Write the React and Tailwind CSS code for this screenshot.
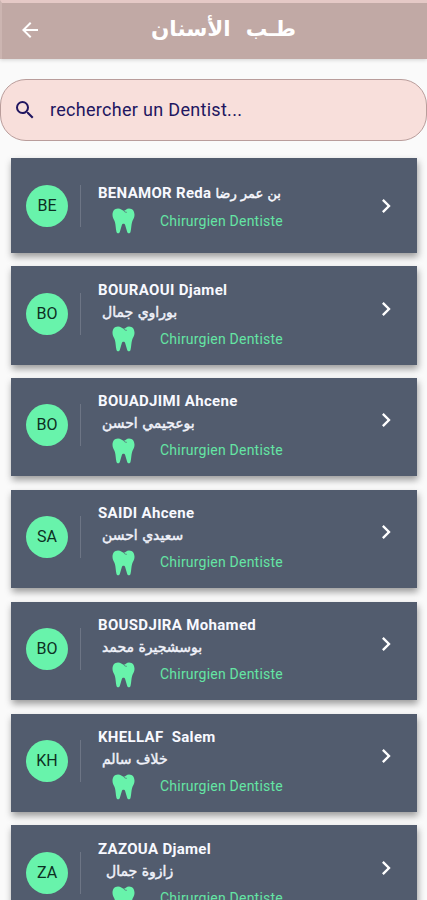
import { MdArrowBack, MdSearch, MdKeyboardArrowRight } from "react-icons/md";

const dentists = [
  { initials: "BO", name: "BOURAOUI Djamel", arabic: "بوراوي جمال", indent: "ml-1" },
  { initials: "BO", name: "BOUADJIMI Ahcene", arabic: "بوعجيمي احسن", indent: "ml-1" },
  { initials: "SA", name: "SAIDI Ahcene", arabic: "سعيدي احسن", indent: "ml-1" },
  { initials: "BO", name: "BOUSDJIRA Mohamed", arabic: "بوسشجيرة محمد", indent: "ml-1" },
  { initials: "KH", name: "KHELLAF  Salem", arabic: "خلاف سالم", indent: "ml-1" },
  { initials: "ZA", name: "ZAZOUA Djamel", arabic: "زازوة جمال", indent: "ml-2" },
];

function Avatar({ initials }) {
  return (
    <div className="ml-[15px] flex h-[42px] w-[55px] shrink-0 border-r border-[#6d7585]">
      <div className="flex size-[42px] items-center justify-center rounded-full bg-[#68f3ab] text-[16px] text-[#0d3023]">
        {initials}
      </div>
    </div>
  );
}

function Tooth() {
  return (
    <svg viewBox="0 0 23 26" className="ml-[14px] h-[26px] w-[23px] shrink-0" fill="#68f3ab">
      <path d="M6 .5C2.300.5.5 3.300.5 7C.5 10 2.200 11.500 2.900 14C3.700 17 3.700 20.500 4.500 24C4.900 25.800 7.300 25.800 7.800 24L9.800 17.200C10.300 15.300 12.700 15.300 13.200 17.200L15.200 24C15.700 25.800 18.100 25.800 18.500 24C19.300 20.500 19.300 17 20.100 14C20.800 11.500 22.500 10 22.500 7C22.500 3.300 20.700.5 17 .5C14.500.5 13.800 2.700 12 2.700C10 2.700 8.700.5 6 .5Z" />
      <path d="M11.800 2.800C12.400 3.900 13.200 4.300 14.400 4.300" fill="none" stroke="#525c6e" strokeWidth="0.7" strokeLinecap="round" />
    </svg>
  );
}

function Specialty() {
  return (
    <div className="flex h-[28px] items-center text-[#64e5a4]">
      <Tooth />
      <span className="ml-[25px] text-[14px] tracking-[0.22px]">Chirurgien Dentiste</span>
    </div>
  );
}

const cardClass = "ml-[11px] mr-[10px] flex shrink-0 bg-[#525c6e] shadow-[1px_4px_7px_rgba(0,0,0,0.38)]";

function DentistCard({ initials, name, arabic, indent }) {
  return (
    <article className={cardClass + " h-[98.500px] mb-[13.400px]"}>
      <div className="pt-[26.500px]">
        <Avatar initials={initials} />
      </div>
      <div className="ml-[17px] flex-1 pt-[12.500px]">
        <h2 className="h-[22px] text-[15px] leading-[22px] font-bold tracking-[0.33px] whitespace-pre text-[#f8f9ff]">{name}</h2>
        <div className="flex h-[24.600px]">
          <span dir="rtl" className={indent + " font-['DejaVu_Sans',sans-serif] text-[14px] leading-[23px] whitespace-nowrap text-[#f0f2fa] [-webkit-text-stroke:0.45px_#f0f2fa]"}>{arabic}</span>
        </div>
        <Specialty />
      </div>
      <MdKeyboardArrowRight className="mt-[28.500px] mr-[17px] size-7 text-white" />
    </article>
  );
}

export default function App() {
  return (
    <main className="flex h-[900px] w-[427px] flex-col overflow-hidden bg-[#fafafa] font-[Roboto,sans-serif]">
      <header className="flex h-[59px] shrink-0 items-center border-t-[3px] border-l-2 border-t-[#e5c9c6] border-l-[#ccb5b1] bg-[#c1a9a5] shadow-[0_1px_4px_rgba(0,0,0,0.16)]">
        <MdArrowBack className="ml-4 mb-0.5 size-6 text-white" />
        <h1 dir="rtl" className="ml-[109px] pb-[5px] font-['DejaVu_Sans',sans-serif] text-[21.500px] leading-none font-bold whitespace-pre text-white">طـب  الأسنان</h1>
      </header>
      <div className="mt-5 mb-[17px] flex h-[62px] shrink-0 items-center rounded-[26px] border border-[#b99d9b] bg-[#f8dfdb] text-[#211660]">
        <MdSearch className="ml-[12px] size-6" />
        <span className="ml-[13px] pb-[2px] text-[18px] tracking-[0.3px]">rechercher un Dentist...</span>
      </div>
      <article className={cardClass + " h-[95px] mb-[13px]"}>
        <div className="pt-[27px]">
          <Avatar initials="BE" />
        </div>
        <div className="ml-[17px] flex-1 pt-[22px]">
          <h2 className="flex h-[27px] items-center text-[15px] font-bold tracking-[0.3px] whitespace-nowrap text-[#f8f9ff]">
            BENAMOR Reda
            <span dir="rtl" className="ml-[4px] font-['DejaVu_Sans',sans-serif] text-[13px] font-normal tracking-normal [-webkit-text-stroke:0.45px_#f8f9ff]">بن عمر رضا</span>
          </h2>
          <Specialty />
        </div>
        <MdKeyboardArrowRight className="mt-[34px] mr-[17px] size-7 text-white" />
      </article>
      {dentists.map((dentist) => (
        <DentistCard key={dentist.name} {...dentist} />
      ))}
    </main>
  );
}
